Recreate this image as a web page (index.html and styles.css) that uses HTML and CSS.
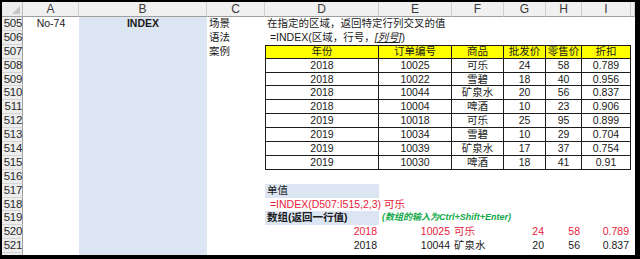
FILE: index.html
```html
<!DOCTYPE html>
<html lang="zh">
<head>
<meta charset="utf-8">
<title>INDEX</title>
<link rel="stylesheet" href="styles.css">
</head>
<body>
<div class="frame">
  <div class="sheet">
    <!-- column headers -->
    <div class="corner"><span class="tri"></span></div>
    <div class="ch">A</div><div class="ch">B</div><div class="ch">C</div><div class="ch">D</div><div class="ch">E</div><div class="ch">F</div><div class="ch">G</div><div class="ch">H</div><div class="ch">I</div><div class="ch"></div>

    <!-- 505 -->
    <div class="rh">505</div><div class="c ctr">No-74</div><div class="c b ctr bold">INDEX</div><div class="c">场景</div><div class="c ov">在指定的区域，返回特定行列交叉的值</div><div class="c"></div><div class="c"></div><div class="c"></div><div class="c"></div><div class="c"></div><div class="c"></div>
    <!-- 506 -->
    <div class="rh">506</div><div class="c"></div><div class="c b"></div><div class="c">语法</div><div class="c ov">&nbsp;=INDEX(区域，行号，<span class="opt">[列号]</span>)</div><div class="c"></div><div class="c"></div><div class="c"></div><div class="c"></div><div class="c"></div><div class="c"></div>
    <!-- 507 -->
    <div class="rh">507</div><div class="c"></div><div class="c b"></div><div class="c">案例</div><div class="t th tl tt">年份</div><div class="t th tt">订单编号</div><div class="t th tt">商品</div><div class="t th tt">批发价</div><div class="t th tt">零售价</div><div class="t th tt">折扣</div><div class="c"></div>
    <!-- 508 -->
    <div class="rh">508</div><div class="c"></div><div class="c b"></div><div class="c"></div><div class="t tl">2018</div><div class="t">10025</div><div class="t">可乐</div><div class="t">24</div><div class="t">58</div><div class="t">0.789</div><div class="c"></div>
    <!-- 509 -->
    <div class="rh">509</div><div class="c"></div><div class="c b"></div><div class="c"></div><div class="t tl">2018</div><div class="t">10022</div><div class="t">雪碧</div><div class="t">18</div><div class="t">40</div><div class="t">0.956</div><div class="c"></div>
    <!-- 510 -->
    <div class="rh">510</div><div class="c"></div><div class="c b"></div><div class="c"></div><div class="t tl">2018</div><div class="t">10044</div><div class="t">矿泉水</div><div class="t">20</div><div class="t">56</div><div class="t">0.837</div><div class="c"></div>
    <!-- 511 -->
    <div class="rh">511</div><div class="c"></div><div class="c b"></div><div class="c"></div><div class="t tl">2018</div><div class="t">10004</div><div class="t">啤酒</div><div class="t">10</div><div class="t">23</div><div class="t">0.906</div><div class="c"></div>
    <!-- 512 -->
    <div class="rh">512</div><div class="c"></div><div class="c b"></div><div class="c"></div><div class="t tl">2019</div><div class="t">10018</div><div class="t">可乐</div><div class="t">25</div><div class="t">95</div><div class="t">0.899</div><div class="c"></div>
    <!-- 513 -->
    <div class="rh">513</div><div class="c"></div><div class="c b"></div><div class="c"></div><div class="t tl">2019</div><div class="t">10034</div><div class="t">雪碧</div><div class="t">10</div><div class="t">29</div><div class="t">0.704</div><div class="c"></div>
    <!-- 514 -->
    <div class="rh">514</div><div class="c"></div><div class="c b"></div><div class="c"></div><div class="t tl">2019</div><div class="t">10039</div><div class="t">矿泉水</div><div class="t">17</div><div class="t">37</div><div class="t">0.754</div><div class="c"></div>
    <!-- 515 -->
    <div class="rh">515</div><div class="c"></div><div class="c b"></div><div class="c"></div><div class="t tl">2019</div><div class="t">10030</div><div class="t">啤酒</div><div class="t">18</div><div class="t">41</div><div class="t">0.91</div><div class="c"></div>
    <!-- 516 -->
    <div class="rh">516</div><div class="c"></div><div class="c b"></div><div class="c"></div><div class="c"></div><div class="c"></div><div class="c"></div><div class="c"></div><div class="c"></div><div class="c"></div><div class="c"></div>
    <!-- 517 -->
    <div class="rh">517</div><div class="c"></div><div class="c b"></div><div class="c"></div><div class="c b">单值</div><div class="c"></div><div class="c"></div><div class="c"></div><div class="c"></div><div class="c"></div><div class="c"></div>
    <!-- 518 -->
    <div class="rh">518</div><div class="c"></div><div class="c b"></div><div class="c"></div><div class="c ov red">&nbsp;=INDEX(D507:I515,2,3) 可乐</div><div class="c"></div><div class="c"></div><div class="c"></div><div class="c"></div><div class="c"></div><div class="c"></div>
    <!-- 519 -->
    <div class="rh">519</div><div class="c"></div><div class="c b"></div><div class="c"></div><div class="c b bold">数组(返回一行值)</div><div class="c ov note">(数组的输入为Ctrl+Shift+Enter)</div><div class="c"></div><div class="c"></div><div class="c"></div><div class="c"></div><div class="c"></div>
    <!-- 520 -->
    <div class="rh">520</div><div class="c"></div><div class="c b"></div><div class="c"></div><div class="c r red">2018</div><div class="c r red">10025</div><div class="c red">可乐</div><div class="c r red">24</div><div class="c r red">58</div><div class="c r red">0.789</div><div class="c"></div>
    <!-- 521 -->
    <div class="rh">521</div><div class="c"></div><div class="c b"></div><div class="c"></div><div class="c r">2018</div><div class="c r">10044</div><div class="c">矿泉水</div><div class="c r">20</div><div class="c r">56</div><div class="c r">0.837</div><div class="c"></div>
    <!-- 522 -->
    <div class="rh"></div><div class="c"></div><div class="c b"></div><div class="c"></div><div class="c"></div><div class="c"></div><div class="c"></div><div class="c"></div><div class="c"></div><div class="c"></div><div class="c"></div>
  </div>
</div>
</body>
</html>
```

FILE: styles.css
```css
html, body {
  margin: 0;
  padding: 0;
  background: #000;
}

.frame {
  width: 640px;
  height: 259px;
  box-sizing: border-box;
  padding: 2px 5px 4px 2px;
  background: #000;
}

.sheet {
  width: 633px;
  height: 253px;
  overflow: hidden;
  background: #fff;
  display: grid;
  grid-template-columns: 21px 56px 128px 58px 114px 73px 52px 42px 36px 49px 4px;
  grid-template-rows: 15px repeat(18, 13.9px);
  font-family: "Liberation Sans", "Noto Sans CJK SC", sans-serif;
  font-size: 10.5px;
  color: #1a1a1a;
}

.corner {
  background: #ececec;
  border-right: 1px solid #bdbdbd;
  border-bottom: 1px solid #9e9e9e;
  position: relative;
}
.tri {
  position: absolute;
  right: 2px;
  bottom: 2px;
  width: 0;
  height: 0;
  border-left: 8px solid transparent;
  border-bottom: 8px solid #c6c6c6;
}

.ch {
  background: #f0f0f0;
  border-right: 1px solid #cfcfcf;
  border-bottom: 1px solid #9e9e9e;
  color: #3a3a3a;
  font-size: 12px;
  line-height: 14px;
  text-align: center;
}

.rh {
  background: #ededed;
  border-right: 1px solid #9e9e9e;
  border-bottom: 1px solid #d4d4d4;
  color: #2a2a2a;
  font-size: 11.5px;
  line-height: 13px;
  text-align: right;
  white-space: nowrap;
  letter-spacing: -0.3px;
}

.c {
  line-height: 13.9px;
  white-space: nowrap;
  padding: 0 2px;
  overflow: visible;
  min-width: 0;
}

.ov {
  position: relative;
  z-index: 1;
  overflow: visible;
}

.ctr { text-align: center; }
.r { text-align: right; }
.bold { font-weight: bold; }

.b { background: #dce6f2; }

.opt {
  font-style: italic;
  text-decoration: underline;
}

.red { color: #e8203a; }

.note {
  color: #12a84a;
  font-style: italic;
  font-weight: bold;
  font-size: 9px;
  padding-left: 3px;
}

.t {
  border-right: 1px solid #1c1c1c;
  border-bottom: 1px solid #1c1c1c;
  text-align: center;
  line-height: 12.9px;
  white-space: nowrap;
  overflow: hidden;
}
.tl { border-left: 1px solid #1c1c1c; }
.tt { border-top: 1px solid #1c1c1c; line-height: 11.9px; }
.th { background: #ffff00; }
```
